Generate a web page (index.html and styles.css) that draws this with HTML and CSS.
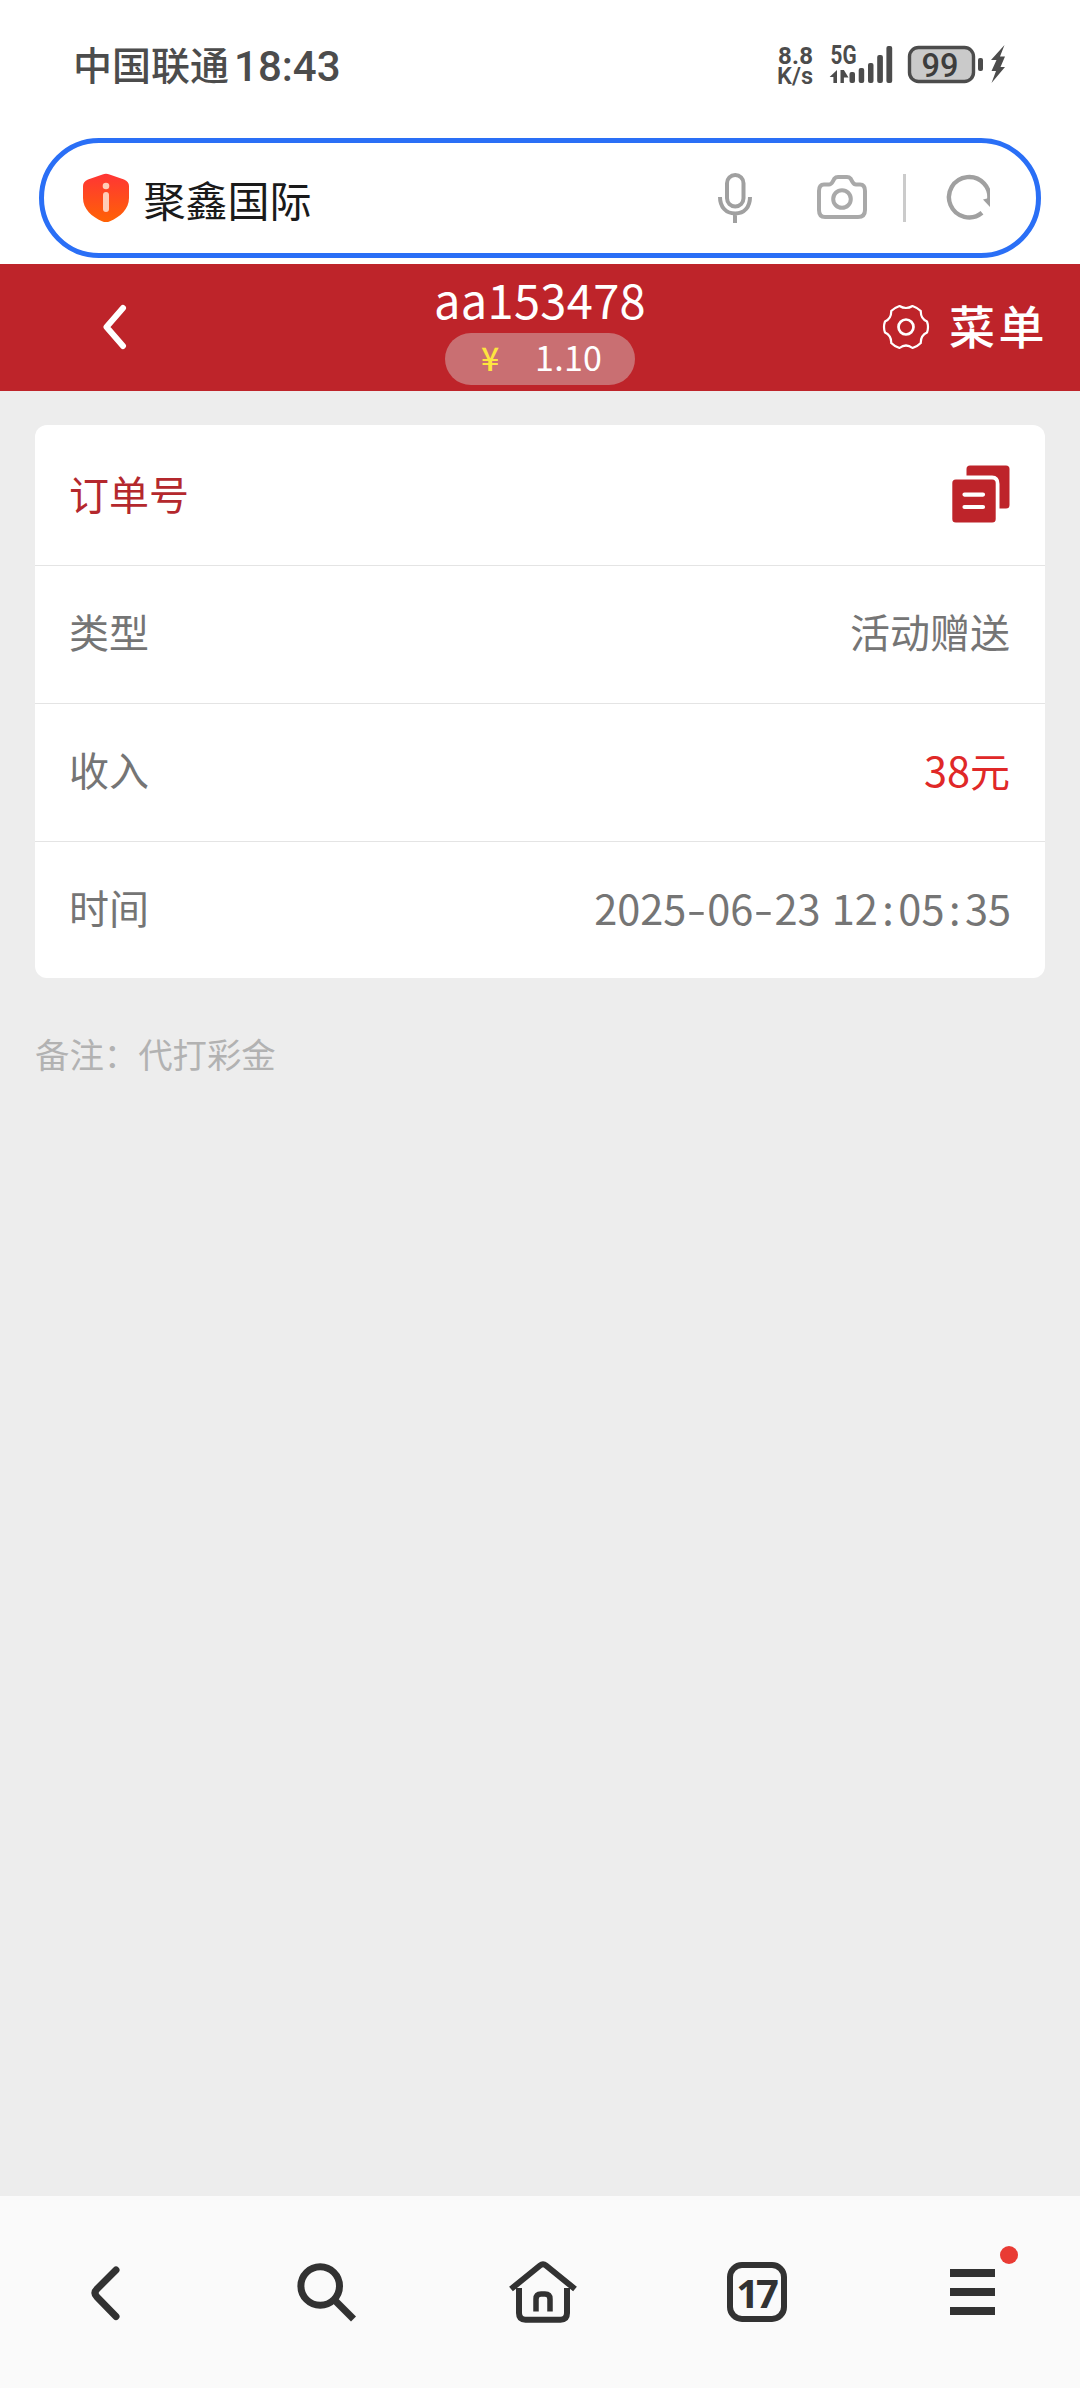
FILE: index.html
```html
<!DOCTYPE html>
<html lang="zh-CN">
<head>
<meta charset="utf-8">
<title>聚鑫国际</title>
<link rel="stylesheet" href="styles.css">
</head>
<body>
<div class="screen">
  <div class="status">
    <span class="carrier">中国联通</span>
    <span class="clock">18:43</span>
    <svg class="indicators" width="240" height="50" viewBox="770 40 240 50">
      <g fill="#4c4c4c" font-family="Roboto, sans-serif" font-weight="700">
        <text x="778" y="63.5" font-size="24" textLength="35" lengthAdjust="spacing">8.8</text>
        <text x="777" y="84" font-size="24" font-weight="600" textLength="36" lengthAdjust="spacingAndGlyphs">K/s</text>
        <text x="830.5" y="63.5" font-size="25" textLength="26" lengthAdjust="spacingAndGlyphs">5G</text>
        <path d="M837 70v13h-3.600v-6h-3.800zM840.500 70h3.400l4.600 7.500h-4.600v5.500h-3.400z"/>
        <rect x="849.500" y="72" width="5.500" height="11" rx="2"/>
        <rect x="858.700" y="68" width="5.500" height="15" rx="2"/>
        <rect x="868" y="63" width="5.500" height="20" rx="2"/>
        <rect x="877.200" y="55" width="5.700" height="28" rx="2"/>
        <rect x="886.400" y="46" width="5.800" height="37" rx="2"/>
        <rect x="909.500" y="47.500" width="64" height="34" rx="9" fill="#cacaca" stroke="#4c4c4c" stroke-width="3.400"/>
        <text x="921.500" y="76.500" font-size="33" font-weight="500" fill="#3d3d3d" textLength="37" lengthAdjust="spacingAndGlyphs">99</text>
        <rect x="978" y="58" width="5" height="13" rx="2"/>
        <path d="M1004.500 45L991 60h5.500L991.500 71h4.500L991.500 83 1005 67h-4.500l4.500-10.500h-5z"/>
      </g>
    </svg>
  </div>

  <div class="address">
    <svg class="shield" width="46" height="50" viewBox="0 0 46 50">
      <defs><linearGradient id="shield" x2="0" y2="1"><stop stop-color="#ff3535"/><stop offset="1" stop-color="#ff6205"/></linearGradient></defs>
      <path d="M19.500 1.500Q23 0 26.500 1.500L41 6.500Q46 8.500 46 13V25C46 36 37 44 27 48.200Q23 50 19 48.200C9 44 0 36 0 25V13Q0 8.500 5 6.500Z" fill="url(#shield)"/>
      <circle cx="23" cy="13" r="3.300" fill="#ffcdb8"/>
      <rect x="20" y="19" width="6" height="20" rx="3" fill="#ffcdb8"/>
    </svg>
    <span class="site">聚鑫国际</span>
    <svg class="tools" width="280" height="60" viewBox="710 168 280 60" fill="none" stroke="#a0a0a0" stroke-width="4">
      <rect x="727" y="175" width="16.500" height="31.500" rx="8.200"/>
      <path d="M720 197C720 207 726 213.500 735.200 213.500S750 207 750 197M735 213v10"/>
      <path d="M824 184.500h5q2 0 3.500-2.500l2-3.500q1.200-1.500 3.500-1.500h9q2.300 0 3.500 1.500l2 3.500q1.500 2.500 3.500 2.500h4Q865 184.500 865 191v19q0 7-7 7h-33q-6 0-6-7v-19q0-6.500 5-6.500z" stroke="#a9a9a9"/>
      <circle cx="842" cy="199" r="8.800" stroke="#a9a9a9"/>
      <rect x="903" y="174" width="3" height="48" fill="#cbcbcb" stroke="none"/>
      <path d="M989 201A20.200 20.200 0 1 0 982 212.800" stroke-width="4.400"/>
      <path d="M983 199.500l8.500-2-1.500 9.500z" fill="#a0a0a0" stroke="none"/>
    </svg>
  </div>

  <header class="header">
    <svg class="back" width="24" height="46" viewBox="0 0 24 46" fill="none" stroke="#fff" stroke-width="6" stroke-linecap="round" stroke-linejoin="round"><path d="M20 4L3.500 23 20 42"/></svg>
    <div class="account">
      <div class="user">aa153478</div>
      <div class="balance"><span class="yen">¥</span><span class="amount">1.10</span></div>
    </div>
    <div class="menu">
      <svg width="48" height="46" viewBox="0 0 48 46" fill="none" stroke="#fff" stroke-width="2.200" stroke-linejoin="round">
        <path d="M17.500 2Q24 6 30.500 2Q36 4 38.800 7Q38.500 14.500 45 17.500Q47 23 45 28.500Q38.500 31.500 38.800 39Q36 42 30.500 44Q24 39 17.500 44Q12 42 9.200 39Q9.500 31.500 3 28.500Q1 23 3 17.500Q9.500 14.500 9.200 7Q12 4 17.500 2Z"/>
        <circle cx="24" cy="23" r="7.500" stroke-width="2.700"/>
      </svg>
      <span>菜单</span>
    </div>
  </header>

  <main class="content">
    <div class="card">
      <div class="row first">
        <span class="order">订单号</span>
        <svg width="58" height="58" viewBox="0 0 58 58" fill="#be242a">
          <path d="M14.500 10.500V4Q14.500.500 18 .500H54Q57.500.500 57.500 4V40Q57.500 43.500 54 43.500H47.500V19Q47.500 10.500 40 10.500Z"/>
          <rect x=".300" y="14.500" width="43.400" height="43" rx="3.500"/>
          <path d="M12.500 29.600h18.500M12.500 42h18.500" stroke="#fff" stroke-width="4.200" stroke-linecap="round"/>
        </svg>
      </div>
      <div class="row"><span>类型</span><span>活动赠送</span></div>
      <div class="row"><span>收入</span><span class="income"><span class="num">38</span>元</span></div>
      <div class="row last"><span>时间</span><span class="num time">2025<i class="dash">-</i>06<i class="dash">-</i>23 12<i class="colon">:</i>05<i class="colon">:</i>35</span></div>
    </div>
    <p class="note">备注：代打彩金</p>
  </main>

  <nav class="nav">
    <svg width="66" height="76" viewBox="72 2254 66 76" fill="none" stroke="#323232" stroke-width="7" stroke-linejoin="round" stroke-linecap="round"><path d="M116 2270L97 2289Q93 2293 97 2297L116 2316.500"/></svg>
    <svg class="search" width="76" height="76" viewBox="287 2254 76 76" fill="none" stroke="#323232" stroke-width="7"><circle cx="320.200" cy="2286" r="19.300"/><path d="M335 2300.500L353.500 2319"/></svg>
    <svg class="home" width="76" height="76" viewBox="505 2254 76 76" fill="none" stroke="#323232" stroke-width="6">
      <path d="M511 2289L540 2265.500Q543 2263 546 2265.500L575 2289" stroke-linejoin="round"/>
      <path d="M519 2288V2313Q519 2319.700 525.500 2319.700H560.500Q567 2319.700 567 2313V2288"/>
      <path d="M536 2311.500V2299Q536 2294 541 2294H545Q550 2294 550 2299V2311.500" stroke-width="5.500"/>
    </svg>
    <div class="tabs">17</div>
    <div class="more"><b></b><b></b><b></b><span class="badge"></span></div>
  </nav>
</div>
</body>
</html>
```
FILE: styles.css
```css
* { box-sizing: border-box; }
body {
  margin: 0;
  background: #fff;
  font-family: "Noto Sans CJK SC", sans-serif;
}
.screen {
  display: flex;
  flex-direction: column;
  width: 1080px;
  height: 2388px;
  overflow: hidden;
}

/* status bar */
.status {
  display: flex;
  align-items: center;
  height: 138px;
  padding: 0 70px 8px 73px;
  color: #4c4c4c;
  line-height: 1;
}
.carrier { margin-top: -3px; font-size: 39px; font-weight: 500; }
.clock {
  margin: 3px auto 0 5px;
  font: 500 42px/1 Roboto, sans-serif;
}

/* address bar */
.address {
  display: flex;
  align-items: center;
  flex: none;
  height: 120px;
  margin: 0 39px 6px;
  padding: 0 46px 0 39px;
  border: 5px solid #2a6ff6;
  border-radius: 60px;
}
.site {
  margin: 1px auto 0 14.500px;
  font-size: 42px;
  line-height: 60px;
  color: #1a1a1a;
}

/* page header */
.header {
  display: grid;
  grid-template-columns: 1fr 300px 1fr;
  align-items: center;
  flex: none;
  height: 127px;
  background: #be242a;
  color: #fff;
}
.back { margin-left: 103px; margin-bottom: 2px; }
.account {
  display: flex;
  flex-direction: column;
  align-items: center;
  align-self: start;
}
.user {
  height: 69px;
  font-size: 47px;
  line-height: 69px;
  letter-spacing: 0.300px;
}
.balance {
  display: flex;
  align-items: center;
  width: 190px;
  height: 52px;
  padding-left: 36px;
  border-radius: 26px;
  background: #c96f72;
  line-height: 46px;
}
.yen, .amount { margin-top: -4px; }
.yen { width: 54px; font-size: 32px; font-weight: 500; color: #fde53f; }
.amount { font-size: 34px; letter-spacing: 0.300px; }
.menu {
  display: flex;
  align-items: center;
  justify-content: flex-end;
  gap: 19px;
  padding: 0 32px 2px 0;
  font-size: 46px;
  font-weight: 500;
  line-height: 64px;
  letter-spacing: 3.500px;
}
.menu span { margin-top: -5px; }

/* page body */
.content {
  flex: 1;
  padding: 34px 35px;
  background: #ededed;
}
.card {
  border-radius: 12px;
  background: #fff;
  color: #757575;
  font-size: 40px;
  line-height: 60px;
}
.row {
  display: flex;
  align-items: center;
  justify-content: space-between;
  height: 138px;
  padding: 0 35px 0 34px;
  border-bottom: 1px solid #e4e4e4;
}
.first { height: 141px; }
.last { height: 136px; border: 0; }
.row > span { margin-top: -7px; }
.row > .order { margin-top: -5px; }
.row svg { margin-bottom: 2px; }
.order { color: #b4282d; }
.income { color: #e02828; }
.num { font-size: 41.500px; }
.time { margin-right: -1px; word-spacing: 2px; }
.dash, .colon {
  display: inline-block;
  width: 21px;
  font-style: normal;
  text-align: center;
}
.dash { transform: scaleX(1.350); }
.colon { width: 20.500px; }
.note {
  margin: 50px 0 0;
  color: #b2b2b2;
  font-size: 34.400px;
  line-height: 50px;
}

/* browser toolbar */
.nav {
  display: flex;
  flex: none;
  align-items: center;
  height: 192px;
  padding-left: 72px;
  background: #fafafa;
}
.search { margin-left: 149px; }
.home { margin-left: 142px; }
.tabs {
  width: 60px;
  height: 60px;
  margin-left: 146px;
  border: 6px solid #323232;
  border-radius: 15px;
  color: #323232;
  font: 700 40px/49px "Open Sans", sans-serif;
  letter-spacing: -3px;
  text-indent: -2px;
  text-align: center;
}
.more {
  position: relative;
  display: flex;
  flex-direction: column;
  gap: 11.300px;
  width: 45px;
  margin-left: 163px;
}
.more b { height: 7.700px; background: #323232; }
.badge {
  position: absolute;
  top: -23px;
  left: 50px;
  width: 18px;
  height: 18px;
  border-radius: 50%;
  background: #e93b34;
}
```
